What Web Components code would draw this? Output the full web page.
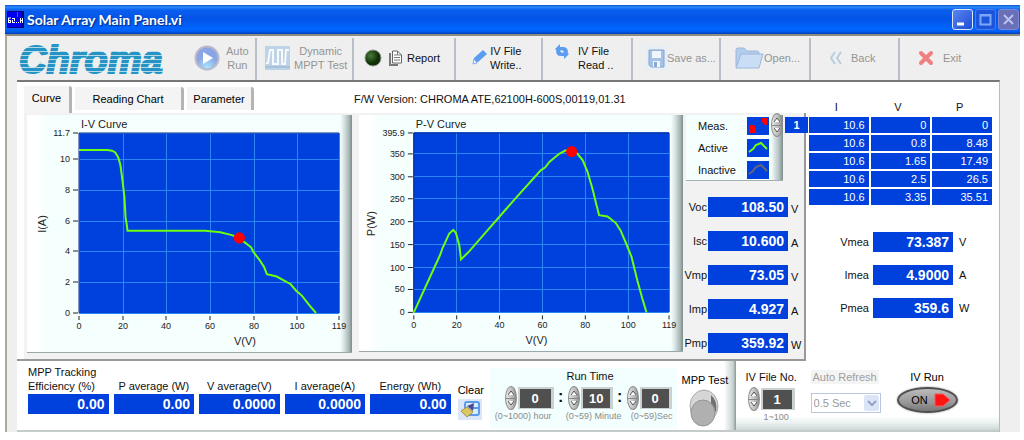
<!DOCTYPE html>
<html lang="en">
<head>
<meta charset="utf-8">
<title>Solar Array Main Panel.vi</title>
<style>
  body {
    margin: 0; background: #fff; color: #111;
    font: 11px/14px "Liberation Sans", Arial, sans-serif;
    --blue: #0040dc; --mint: #f5fffe; --face: #f2f2f2; --off: #949494;
  }
</style>
</head>
<body>
<main-panel></main-panel>

<script>
/* ── <panel-window> : XP style frame, title bar, toolbar slot and client area ── */
class PanelWindow extends HTMLElement {
  connectedCallback() {
    if (this.shadowRoot) return;
    this.attachShadow({ mode: 'open' }).innerHTML = `
      <style>
        :host { display: block; padding: 5px 4px 7px 5px; }
        header {
          display: flex; align-items: center; gap: 3px; height: 29px; padding: 0 1px 0 2px; box-sizing: border-box;
          background: linear-gradient(#0a4fcf 0, #2b8bff 2px, #0a5fee 5px, #0353e6 14px, #0064ff 23px, #0060fa 26px, #0040b8 29px);
        }
        h1 { flex: 1; margin: 0; color: #fff; font: bold 14px/20px Lato, sans-serif; text-shadow: 1px 1px 1px #002a80; }
        header button { width: 21px; height: 21px; padding: 0; border: 1px solid #dbe6ff; border-radius: 3px; background: linear-gradient(135deg, #5c86f0, #1c4cd6); }
        header button svg { display: block; }
        header button.dim { border-color: #4a7bf0; background: #1b55dc; }
        header button.shut { border-color: #7d88d4; background: #6a70b8; }
        header button + button { margin-left: -1px; }
        .body { border-left: 2px solid #aca899; border-top: 2px solid #8e8c80; background: #efefef; }
        .client { margin: 0 20px 0 10px; border-top: 2px solid #777; border-right: 1px solid #b4bcbc; background: #fff; }
      </style>
      <header>
        <svg width="17" height="17" viewBox="0 0 17 17" aria-hidden="true">
          <rect width="17" height="17" fill="#000080"/><rect x="1" y="1" width="14" height="15" fill="#0000f0"/>
          <path d="M10.500 1v5" stroke="#f22"/>
          <path d="M1 7h3M1.500 7v5M1 9.500h3M3.500 9v3M1 11.500h3M5 7.500h3M7.500 7v3M5.500 9v3M5 11.500h3M9 11.500h1M11 11.500h1M13.500 7v5M15.500 7v5M13 9.500h3" stroke="#fff" fill="none"/>
        </svg>
        <h1><slot name="title"></slot></h1>
        <button aria-label="Minimize"><svg width="19" height="19"><path d="M4 14h7" stroke="#fff" stroke-width="3"/></svg></button>
        <button class="dim" aria-label="Maximize"><svg width="19" height="19"><path d="M4.500 5v9.500h10V5zM4 5.500h11" stroke="#7fa5f5" stroke-width="2" fill="none"/></svg></button>
        <button class="shut" aria-label="Close"><svg width="19" height="19"><path d="M5 5l9 9M14 5l-9 9" stroke="#b9c2ee" stroke-width="2"/></svg></button>
      </header>
      <div class="body">
        <slot name="toolbar"></slot>
        <div class="client"><slot></slot></div>
      </div>`;
  }
}

/* ── <chroma-logo> ── */
class ChromaLogo extends HTMLElement {
  connectedCallback() {
    if (this.shadowRoot) return;
    this.attachShadow({ mode: 'open' }).innerHTML = `
      <style>
        :host { display: block; }
        svg { display: block; }
        text { font: italic bold 38px "Liberation Sans", Arial, sans-serif; }
      </style>
      <svg width="164" height="44" role="img" aria-label="Chroma">
        <defs><pattern id="stripes" width="8" height="4" patternUnits="userSpaceOnUse">
          <rect width="8" height="4" fill="#b4d9e9"/><rect width="8" height="3" fill="#2594c4"/>
        </pattern></defs>
        <text x="12" y="37" fill="url(#stripes)" stroke="url(#stripes)" stroke-width="2">Chroma</text>
      </svg>`;
  }
}

/* ── <tool-button> : icon slot + one or two lines of label ── */
class ToolButton extends HTMLElement {
  connectedCallback() {
    if (this.shadowRoot) return;
    const off = this.hasAttribute('off');
    this.attachShadow({ mode: 'open' }).innerHTML = `
      <style>
        :host { display: block; border-right: 2px solid #b9bfc6; margin-top: 2px; }
        :host([last]) { border: 0; }
        button {
          display: flex; align-items: center; gap: var(--gap, 6px); box-sizing: border-box;
          width: 100%; height: 42px; padding: 0 0 2px var(--lead, 10px); border: 0; background: none;
          font: inherit; color: #111; white-space: nowrap;
        }
        button:disabled { color: var(--off); }
        :host([left]) span { text-align: left; }
        slot { display: flex; align-items: center; gap: 7px; }
        span slot { display: block; }
      </style>
      <button ${off ? 'disabled' : ''}><slot name="icon"></slot><span><slot></slot></span></button>`;
  }
}

/* ── <tab-strip> ── */
class TabStrip extends HTMLElement {
  connectedCallback() {
    if (this.shadowRoot) return;
    const tabs = this.getAttribute('tabs').split('|');
    const widths = [48, 109, 67];
    this.attachShadow({ mode: 'open' }).innerHTML = `
      <style>
        :host { display: flex; align-items: flex-end; padding: 4px 0 0 7px; }
        div { display: flex; align-items: flex-end; gap: 3px; }
        button {
          height: 23px; margin: 0 0 3px; padding: 0; border: 0; border-right: 3px solid #b4b4b4; border-top-right-radius: 3px;
          background: #f4f4f4; font: inherit; color: #000;
        }
        button[aria-selected=true] { height: 27px; margin: 0; padding-bottom: 4px; }
        p { margin: 0 0 7px 100px; white-space: nowrap; }
      </style>
      <div role="tablist">${tabs.map((t, i) =>
        `<button role="tab" aria-selected="${i === 0}" style="width:${widths[i]}px">${t}</button>`).join('')}</div>
      <p><slot></slot></p>`;
  }
}

/* ── <curve-chart> : plot with grid, axis scales, curve and the MPP marker ── */
class CurveChart extends HTMLElement {
  connectedCallback() {
    if (this.shadowRoot) return;
    const num = n => Number(this.getAttribute(n));
    const left = num('plot-left'), w = num('plot-width'), top = 18, h = 180;
    const xMax = 119, yMax = num('y-max'), step = num('y-step');
    const X = v => left + v / xMax * w;
    const Y = v => top + h - v / yMax * h;
    const at = p => { const [x, y] = p.split(','); return [X(x), Y(y)]; };

    let grid = '', scale = '';
    for (const v of [0, 20, 40, 60, 80, 100, xMax]) {
      const x = Math.round(X(v));
      grid += `<path class="grid" d="M${x} ${top}v${h}"/>`;
      scale += `<path class="tick" d="M${x} ${top + h + 3}v4"/><text class="num" x="${x}" y="${top + h + 16}" text-anchor="middle">${v}</text>`;
    }
    // the top label is the range end; drop a step that would crowd it
    const ys = [];
    for (let v = 0; v < yMax - step * 0.8; v += step) ys.push(v);
    ys.push(yMax);
    for (const v of ys) {
      const y = Math.round(Y(v));
      grid += `<path class="grid" d="M${left} ${y}h${w}"/>`;
      scale += `<path class="tick" d="M${left - 6} ${y}h5"/><text class="num" x="${left - 9}" y="${y + 3}" text-anchor="end">${v}</text>`;
    }
    const line = this.getAttribute('points').trim().split(/\s+/).map(p => at(p).join(',')).join(' ');
    const [mx, my] = at(this.getAttribute('marker'));
    const lx = num('label-left');

    this.attachShadow({ mode: 'open' }).innerHTML = `
      <style>
        :host {
          display: block; border-bottom: 1px solid #9ba8a8; box-sizing: border-box;
          background: linear-gradient(90deg, #fff 10px, transparent 20px), linear-gradient(270deg, #7f8c8c 0, #a9b6b6 3px, #d8e4e4 8px, var(--mint) 12px);
        }
        svg { display: block; width: 100%; height: auto; }
        text { font: 11px "Liberation Sans", Arial, sans-serif; fill: #222; }
        .num { font-size: 9px; }
        .grid { stroke: #2a86f5; stroke-width: 1; fill: none; }
        .tick { stroke: #222; fill: none; }
      </style>
      <svg viewBox="0 0 325 237" role="img" aria-label="${this.getAttribute('title-text')}">
        <text x="${left + 2}" y="13">${this.getAttribute('title-text')}</text>
        <rect x="${left}" y="${top}" width="${w}" height="${h}" fill="#0040dc"/>
        <g shape-rendering="crispEdges">${grid}</g>
        <path d="M${left} ${top + h}V${top}H${left + w}" stroke="#0a2a8c" fill="none"/>
        <g>${scale}</g>
        <text transform="translate(${lx} 109) rotate(-90)" text-anchor="middle">${this.getAttribute('y-label')}</text>
        <text x="${num('x-label-left')}" y="230">V(V)</text>
        <polyline points="${line}" fill="none" stroke="#6cff10" stroke-width="2"/>
        <circle cx="${mx}" cy="${my}" r="5.600" fill="#f00"/>
      </svg>`;
  }
}

/* ── <plot-legend> ── */
class PlotLegend extends HTMLElement {
  connectedCallback() {
    if (this.shadowRoot) return;
    const rows = [
      ['Meas.', '<path d="M2 8h5l2 3v5H2zM15 1h5v7h-2l-3-3z" fill="#f00"/>'],
      ['Active', '<path d="M2 13l4-3 3-4 5-2 2 2 4 4" stroke="#6cff10" stroke-width="2" fill="none"/>'],
      ['Inactive', '<path d="M2 13l4-3 3-4 5-2 2 2 4 4" stroke="#667" stroke-width="2" fill="none"/>'],
    ];
    this.attachShadow({ mode: 'open' }).innerHTML = `
      <style>
        :host {
          display: block; box-sizing: border-box; width: 97px; padding: 2px 14px 1px 12px; border-bottom: 1px solid #a5b0b0;
          background: linear-gradient(270deg, #7f8c8c 0, #b4c0c0 4px, #dce8e8 9px, var(--mint) 12px);
        }
        ul { display: grid; gap: 4px; margin: 0; padding: 0; list-style: none; }
        li { display: flex; justify-content: space-between; align-items: center; }
        svg { display: block; background: var(--blue); }
      </style>
      <ul>${rows.map(([t, g]) => `<li><span>${t}</span><svg width="22" height="18" aria-hidden="true">${g}</svg></li>`).join('')}</ul>`;
  }
}

/* ── <read-out> : label, blue value box, unit ── */
class ReadOut extends HTMLElement {
  connectedCallback() {
    if (this.shadowRoot) return;
    const a = n => this.getAttribute(n) || '';
    this.attachShadow({ mode: 'open' }).innerHTML = `
      <style>
        :host { display: grid; grid-template-columns: var(--label, 21px) 80px auto; align-items: center; gap: 1px; }
        :host([stacked]) { display: flex; flex-direction: column; align-items: stretch; justify-content: flex-end; gap: 1px; flex: 1 1 81px; }
        label { text-align: right; white-space: nowrap; justify-self: end; padding-right: var(--space, 0); }
        :host([stacked]) label { text-align: var(--side, center); white-space: pre-line; line-height: 14px; }
        output {
          display: block; box-sizing: border-box; height: 20px; padding: 0 4px; background: var(--blue);
          color: #fff; font: bold 14px/20px "Liberation Sans", Arial, sans-serif; text-align: right;
        }
        .unit { padding: var(--drop, 3px) 0 0 var(--unit, 2px); }
      </style>
      <label for="v">${a('label')}</label>
      <output id="v">${a('value')}</output>
      ${a('unit') && `<span class="unit">${a('unit')}</span>`}`;
  }
}

/* ── <spin-arrows> : oval increment / decrement knob ── */
class SpinArrows extends HTMLElement {
  connectedCallback() {
    if (this.shadowRoot) return;
    this.attachShadow({ mode: 'open' }).innerHTML = `
      <style>
        :host {
          display: flex; flex-direction: column; width: 12px; height: 24px; box-sizing: border-box; overflow: hidden;
          border: 1px solid #8c8c8c; border-radius: 50%; background: linear-gradient(90deg, #e6e6e6, #b4b4b4 70%, #8a8a8a);
        }
        button { flex: 1; padding: 0; border: 0; background: none; }
        button + button { border-top: 1px solid #888; }
        svg { display: block; margin: auto; }
      </style>
      <button aria-label="Increase"><svg width="6" height="5"><path d="M0 5l3-4 3 4" fill="#fff" stroke="#555"/></svg></button>
      <button aria-label="Decrease"><svg width="6" height="5"><path d="M0 0l3 4 3-4" fill="#fff" stroke="#555"/></svg></button>`;
  }
}

/* ── <number-stepper> ── */
class NumberStepper extends HTMLElement {
  connectedCallback() {
    if (this.shadowRoot) return;
    this.attachShadow({ mode: 'open' }).innerHTML = `
      <style>
        :host { display: block; }
        div { display: flex; align-items: center; gap: 1px; }
        input {
          box-sizing: border-box; width: var(--box, 32px); height: 22px; padding: 0; text-align: center;
          border: solid #c9d2d0; border-width: 2px 3px 1px 2px; background: #505050; color: #fff; border-radius: 0;
          font: bold 13px "Liberation Sans", Arial, sans-serif;
        }
        /* the range caption may run wider than the control above it */
        small { display: block; width: 0; margin-left: var(--shift, 0); font-size: 9px; line-height: 12px; color: #8a8a8a; white-space: nowrap; }
      </style>
      <div><spin-arrows></spin-arrows><input aria-label="${this.getAttribute('label')}" value="${this.getAttribute('value')}"></div>
      <small>${this.getAttribute('range')}</small>`;
  }
}

/* ── <point-table> : I / V / P list with its index selector ── */
class PointTable extends HTMLElement {
  connectedCallback() {
    if (this.shadowRoot) return;
    const rows = [['10.6', '0', '0'], ['10.6', '0.8', '8.48'], ['10.6', '1.65', '17.49'], ['10.6', '2.5', '26.5'], ['10.6', '3.35', '35.51']];
    this.attachShadow({ mode: 'open' }).innerHTML = `
      <style>
        :host { display: block; position: relative; }
        table { width: 100%; border-collapse: separate; border-spacing: 2px; table-layout: fixed; }
        th { height: 16px; padding: 0 5px 0 0; font-weight: normal; }
        td { height: 16px; padding: 0 4px; line-height: 16px; text-align: right; color: #fff; background: var(--blue); }
        .index { position: absolute; right: 100%; top: 16px; display: flex; align-items: center; gap: 2px; margin-right: -1px; }
        .index input {
          box-sizing: border-box; width: 23px; height: 16px; padding: 0; border: 0; text-align: center;
          background: var(--blue); color: #fff; font: bold 11px "Liberation Sans", Arial, sans-serif;
        }
      </style>
      <div class="index"><spin-arrows></spin-arrows><input aria-label="Row index" value="1"></div>
      <table>
        <thead><tr><th>I</th><th>V</th><th>P</th></tr></thead>
        <tbody>${rows.map(r => `<tr>${r.map(c => `<td>${c}</td>`).join('')}</tr>`).join('')}</tbody>
      </table>`;
  }
}

/* ── <run-controls> : lower strip ── */
class RunControls extends HTMLElement {
  connectedCallback() {
    if (this.shadowRoot) return;
    this.attachShadow({ mode: 'open' }).innerHTML = `
      <style>
        :host { display: flex; height: 71px; border-bottom: 2px solid #c3cccb; box-sizing: border-box; }
        .left { flex: 723 1 0; display: flex; gap: 5px; padding-left: 11px; background: linear-gradient(270deg, #8a9796 0, #c8d2d1 3px, #fff 12px); }
        .left read-out { height: 53px; }
        .right { flex: 259 1 0; display: flex; padding: 9px 0 0 10px; background: linear-gradient(0deg, #cdd8d6 0, #eef4f3 8px, #fff 14px); }
        .clear { margin: 13px 0 0 2px; padding: 0; border: 0; width: 25px; background: none; font: inherit; text-align: center; }
        .clear svg { display: block; }
        .time { width: 188px; height: 60px; margin: 7px 0 0 2px; background: #f2fffe; text-align: center; }
        .time h2 { margin: 0; padding: 1px 0 0 14px; font: inherit; }
        .row { display: flex; text-align: left; padding: 3px 0 0 15px; }
        .row b { width: 14px; padding-top: 3px; font-size: 16px; line-height: 16px; text-align: center; }
        .mpp { width: 44px; margin: 8px 10px 0 0; padding: 0; border: 0; background: none; font: inherit; white-space: nowrap; text-align: center; }
        .mpp svg { display: block; margin: 2px auto 0; }
        .file { width: 65px; }
        .file span { white-space: nowrap; }
        .file number-stepper { margin: 3px 0 0 2px; }
        .refresh { display: flex; flex-direction: column; gap: 9px; align-items: flex-start; color: #a0a0a0; }
        .refresh label { background: #f4f4f4; padding: 0 2px; line-height: 14px; }
        .pick { display: grid; }
        select, .pick svg { grid-area: 1 / 1; }
        select { appearance: none; width: 70px; height: 20px; padding: 0 2px; border: 1px solid #b9c6dd; border-radius: 0; background: #fff; color: #999; opacity: 1; font: inherit; }
        .pick svg { justify-self: end; align-self: center; margin-right: 2px; }
        .run { margin-left: 16px; padding: 0; border: 0; background: none; font: inherit; display: flex; flex-direction: column; align-items: center; gap: 3px; }
        .on { display: flex; align-items: center; justify-content: center; gap: 6px; box-sizing: border-box; width: 61px; height: 26px; padding-left: 8px; border: 2px solid #4d4d4d; border-radius: 50%; background: linear-gradient(#bbb, #999 60%, #777); box-shadow: 0 0 2px #888; }
      </style>
      <div class="left">
        <read-out stacked style="--side: left" label="MPP Tracking&#10;Efficiency (%)" value="0.00"></read-out>
        <read-out stacked label="P average (W)" value="0.00"></read-out>
        <read-out stacked label="V average(V)" value="0.0000"></read-out>
        <read-out stacked label="I average(A)" value="0.0000"></read-out>
        <read-out stacked label="Energy (Wh)" value="0.00"></read-out>
        <button class="clear">Clear
          <svg width="25" height="24" viewBox="0 0 25 24" aria-hidden="true">
            <rect y="2" width="24" height="21" fill="#dbe6f6"/>
            <rect x="7" y="5" width="14" height="13" rx="2" fill="#dcebff" stroke="#5b9bea" stroke-width="2"/>
            <path d="M13 11h8" stroke="#5b9bea" stroke-width="2"/>
            <path d="M3 14l6-4 6 5-6 5z" fill="#dcc765" stroke="#a9944a"/><path d="M9 9l7-3-1 8z" fill="#4a4a92"/>
          </svg>
        </button>
        <div class="time">
          <h2>Run Time</h2>
          <div class="row">
            <number-stepper style="--box: 36px; --shift: -10px" label="Hours" value="0" range="(0~1000) hour"></number-stepper><b>:</b>
            <number-stepper style="--box: 32px; --shift: -2px" label="Minutes" value="10" range="(0~59) Minute"></number-stepper><b>:</b>
            <number-stepper style="--box: 32px; --shift: 4px" label="Seconds" value="0" range="(0~59)Sec"></number-stepper>
          </div>
        </div>
        <button class="mpp">MPP Test
          <svg width="32" height="38" viewBox="0 0 32 38" aria-hidden="true">
            <ellipse cx="16" cy="17" rx="14" ry="16" fill="#d6d6d6" stroke="#aaa"/>
            <path d="M23 6q7 6 5 17l-5-3z" fill="#707070"/>
            <ellipse cx="15" cy="24" rx="12" ry="13" fill="#b0b0b0" stroke="#959595"/>
          </svg>
        </button>
      </div>
      <div class="right">
        <div class="file"><span>IV File No.</span>
          <number-stepper style="--box: 34px; --shift: 16px" label="IV File No." value="1" range="1~100"></number-stepper>
        </div>
        <div class="refresh">
          <label for="rate">Auto Refresh</label>
          <div class="pick">
            <select id="rate" disabled><option>0.5 Sec</option></select>
            <svg width="15" height="16" aria-hidden="true"><rect width="15" height="16" rx="2" fill="#dce4f8"/><path d="M4 6l4 4 4-4" fill="none" stroke="#94a4c8" stroke-width="2"/></svg>
          </div>
        </div>
        <button class="run"><span>IV Run</span>
          <span class="on">ON<svg width="17" height="14" aria-hidden="true"><path d="M1 1h8l7 6-7 6H1z" fill="#ff1414" stroke="#f55"/></svg></span>
        </button>
      </div>`;
  }
}

/* ── <main-panel> : puts the whole VI together ── */
class MainPanel extends HTMLElement {
  connectedCallback() {
    if (this.shadowRoot) return;
    this.attachShadow({ mode: 'open' }).innerHTML = `
      <style>
        :host { display: block; }
        nav { display: grid; grid-template-columns: 186fr 64fr 97fr 102fr 87fr 90fr 88fr 90fr 89fr 120fr; height: 44px; }
        .work { display: grid; grid-template-columns: 789fr 193fr; }
        .page {
          display: grid; grid-template-columns: 325fr 324fr 118fr; padding: 2px 10px 6px 10px; align-items: start;
          border: solid #999; border-width: 0 2px 2px 0;
          background: linear-gradient(90deg, #fff 7px, var(--face) 7px);
        }
        .pv { margin-left: 7px; margin-right: -7px; }
        .side { margin-left: 10px; margin-right: -10px; }
        .values { display: grid; gap: 14px; margin-top: 16px; }
        .points { padding: 15px 5px 0 1px; }
        .live { display: grid; gap: 13px; margin-top: 25px; --label: 65px; --space: 3px; --unit: 5px; --drop: 0; }
      </style>
      <panel-window>
        <span slot="title">Solar Array Main Panel.vi</span>
        <nav slot="toolbar" aria-label="Tools">
          <chroma-logo></chroma-logo>
          <tool-button off style="--lead: 1px">
            <svg slot="icon" width="26" height="26" viewBox="0 0 26 26">
              <defs><radialGradient id="orb" cy=".9"><stop offset="0" stop-color="#a9e4fb"/><stop offset="1" stop-color="#8ba4e6"/></radialGradient></defs>
              <circle cx="13" cy="13" r="11.500" fill="url(#orb)" stroke="#b9b9c9" stroke-width="2"/><path d="M9 7l10 6-10 6z" fill="#fff"/>
            </svg>Auto<br>Run</tool-button>
          <tool-button off style="--lead: 8px; --gap: 4px">
            <svg slot="icon" width="25" height="24" viewBox="0 0 25 24">
              <rect width="25" height="24" fill="#bdd3e8"/><path d="M1 17h2L5 4h3v14h5V4h4v14h3l1-14h3" fill="none" stroke="#f6fafd" stroke-width="2"/><path d="M0 21h25" stroke="#a9c2da" stroke-width="2"/>
            </svg>Dynamic<br>MPPT Test</tool-button>
          <tool-button style="--gap: 5px">
            <svg slot="icon" width="18" height="20" viewBox="0 0 18 20">
              <defs><radialGradient id="led" cx=".35" cy=".35"><stop offset="0" stop-color="#4b7a3a"/><stop offset="1" stop-color="#0f2e06"/></radialGradient></defs>
              <circle cx="9" cy="10" r="8" fill="url(#led)" stroke="#8a948a"/>
            </svg>
            <svg slot="icon" width="13" height="16" viewBox="0 0 13 16">
              <path d="M1 3v12h8" fill="none" stroke="#777" stroke-width="2"/><path d="M3.500 1h5l4 4v8h-9z" fill="#fff" stroke="#666"/><path d="M5 5h3M5 7.500h6M5 10h6M8.500 1v4h4" stroke="#777" fill="none"/>
            </svg>Report</tool-button>
          <tool-button style="--lead: 16px; --gap: 3px">
            <svg slot="icon" width="15" height="20" viewBox="0 0 15 20"><path d="M1 16l1-6 9-8 4 4-9 8z" fill="#5a9df0"/><path d="M1 16l1-5 3 4z" fill="#fff" stroke="#7db0f3" stroke-width="1"/></svg>IV File<br>Write..</tool-button>
          <tool-button left style="--lead: 12px; --gap: 9px">
            <svg slot="icon" width="14" height="28" viewBox="0 0 14 28"><path d="M5 0L0 5l5 4V6.500h3l1 2h4Q13 3 8 3H5zM9 15l5-5-5-4v2.500H6l-1-2H1Q1 12 6 12h3z" fill="#5a9df0"/></svg>IV File<br>Read ..</tool-button>
          <tool-button off style="--lead: 12px; --gap: 0px">
            <svg slot="icon" width="22" height="24" viewBox="0 0 22 24"><rect width="22" height="24" fill="#e8eef6"/><path d="M4 4h15v17H6l-2-2z" fill="#a4c2e8" stroke="#86a6d2"/><path d="M7 5h9v7H7zM8 15h7v6H8z" fill="#eff5fc"/><path d="M9 16h3v5H9z" fill="#8aa8d4"/></svg>Save as...</tool-button>
          <tool-button off style="--lead: 14px; --gap: 0px">
            <svg slot="icon" width="29" height="22" viewBox="0 0 29 22"><path d="M1 3q0-2 2-2h6l3 3h10q2 0 2 2v14H1z" fill="#b4cdec" stroke="#9db8dc"/><path d="M6 7h22l-4 14H1z" fill="#c9ddf4" stroke="#9db8dc"/></svg>Open...</tool-button>
          <tool-button off style="--lead: 18px; --gap: 9px">
            <svg slot="icon" width="13" height="14" viewBox="0 0 13 14"><path d="M6 1L2 7l4 6M12 1L8 7l4 6" fill="none" stroke="#b4cedf" stroke-width="2"/></svg>Back</tool-button>
          <tool-button off last style="--lead: 18px; --gap: 9px">
            <svg slot="icon" width="16" height="16" viewBox="0 0 16 16"><path d="M3 3l10 10M13 3L3 13" stroke="#f08080" stroke-width="4" stroke-linecap="round"/></svg>Exit</tool-button>
        </nav>
        <div class="work">
          <div>
            <tab-strip tabs="Curve|Reading Chart|Parameter">F/W Version: CHROMA ATE,62100H-600S,00119,01.31</tab-strip>
            <div class="page" role="tabpanel">
              <curve-chart title-text="I-V Curve" y-label="I(A)" y-max="11.7" y-step="2" plot-left="52" plot-width="260"
                label-left="19" x-label-left="207" marker="73.4,4.88"
                points="0,10.6 12.9,10.6 15.2,10.55 16.6,10.44 18,10.1 18.9,9.66 19.8,8.73 20.8,7.53 21.3,6.23 21.9,5.69 22.2,5.34 57.8,5.34 64.7,5.25 70,5.06 73.2,4.88 78.7,4.28 79.9,3.95 82.6,3.45 84.8,2.97 86,2.52 90.5,2.37 96.9,1.87 99.4,1.45 102,1.13 105.5,0.5 108.5,0"></curve-chart>
              <curve-chart class="pv" title-text="P-V Curve" y-label="P(W)" y-max="395.9" y-step="50" plot-left="55" plot-width="256"
                label-left="16" x-label-left="167" marker="73.6,354.8"
                points="0,0 7.6,78.6 12.2,126 13.4,142 16.5,174 18.4,182 19.6,175.5 21.2,148 22,117 25.3,132 32.3,170 47.3,251 59.3,314 61.2,319.5 63.2,332 67.8,350 70.6,357 73.6,358 76.3,350 78.7,336 81,310 83.3,273 85.2,236.5 86.4,214.5 90.3,211.5 94.1,197.6 96.4,181 99,152 101.5,122.7 104.2,71 106.5,31 108.5,0"></curve-chart>
              <div class="side">
                <plot-legend></plot-legend>
                <div class="values">
                  <read-out label="Voc" value="108.50" unit="V"></read-out>
                  <read-out label="Isc" value="10.600" unit="A"></read-out>
                  <read-out label="Vmp" value="73.05" unit="V"></read-out>
                  <read-out label="Imp" value="4.927" unit="A"></read-out>
                  <read-out label="Pmp" value="359.92" unit="W"></read-out>
                </div>
              </div>
            </div>
          </div>
          <div class="points">
            <point-table></point-table>
            <div class="live">
              <read-out label="Vmea" value="73.387" unit="V"></read-out>
              <read-out label="Imea" value="4.9000" unit="A"></read-out>
              <read-out label="Pmea" value="359.6" unit="W"></read-out>
            </div>
          </div>
        </div>
        <run-controls></run-controls>
      </panel-window>`;
  }
}

const parts = {
  'panel-window': PanelWindow, 'chroma-logo': ChromaLogo, 'tool-button': ToolButton, 'tab-strip': TabStrip,
  'curve-chart': CurveChart, 'plot-legend': PlotLegend, 'read-out': ReadOut, 'spin-arrows': SpinArrows,
  'number-stepper': NumberStepper, 'point-table': PointTable, 'run-controls': RunControls, 'main-panel': MainPanel,
};
for (const [name, part] of Object.entries(parts)) {
  if (!customElements.get(name)) customElements.define(name, part);
}
</script>
</body>
</html>
